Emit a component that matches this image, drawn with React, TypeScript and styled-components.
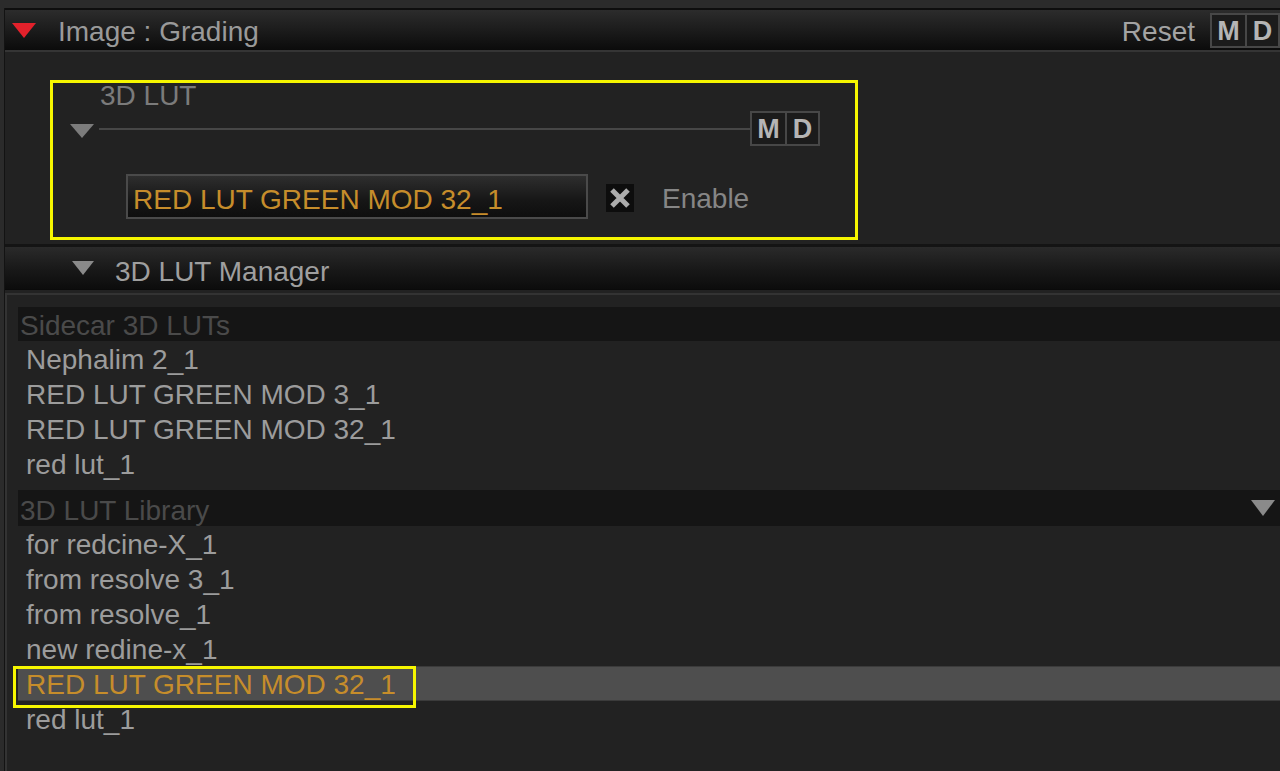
import React from "react";
import styled, { createGlobalStyle } from "styled-components";

const Global = createGlobalStyle`
  html, body { margin: 0; padding: 0; background: #222; }
  body { font-family: "Liberation Sans", Arial, sans-serif; }
  * { box-sizing: border-box; }
`;

const Page = styled.div`
  width: 1280px;
  height: 771px;
  overflow: hidden;
  background: #2b2b2b;
  padding: 8px 0 0 4px;
  display: flex;
  flex-direction: column;
`;

const Group = styled.div`
  flex: 1;
  display: flex;
  flex-direction: column;
  background: #222;
  border-left: 1px solid #131313;
  min-height: 0;
`;

const GroupHeader = styled.div`
  height: 44px;
  border-top: 2px solid #0e0e0e;
  border-bottom: 2px solid #353535;
  background: linear-gradient(#2c2c2c, #1a1a1a 55%, #0b0b0b);
  display: flex;
  align-items: center;
  padding-left: 7px;
  flex-shrink: 0;
`;

const Triangle = styled.div<{ $color: string; $w: number; $h: number }>`
  width: 0;
  height: 0;
  border-left: ${(p) => p.$w / 2}px solid transparent;
  border-right: ${(p) => p.$w / 2}px solid transparent;
  border-top: ${(p) => p.$h}px solid ${(p) => p.$color};
  flex-shrink: 0;
`;

const Title = styled.span<{ $gap: number }>`
  margin-left: ${(p) => p.$gap}px;
  font-size: 28px;
  line-height: 40px;
  padding-top: 4px;
  color: #9a9a9a;
  white-space: nowrap;
`;

const Spacer = styled.div`
  flex: 1;
`;

const ResetLabel = styled.span`
  font-size: 28px;
  line-height: 40px;
  padding-top: 4px;
  color: #a3a3a3;
  margin-right: 15px;
`;

const MDGroup = styled.div`
  display: flex;
  border: 2px solid #474747;
  background: #1b1b1b;
  flex-shrink: 0;
  height: 35px;
`;

const MDCell = styled.div`
  width: 33px;
  height: 31px;
  display: flex;
  align-items: center;
  justify-content: center;
  padding-top: 2px;
  font-size: 27px;
  font-weight: bold;
  color: #b5b5b5;
  & + & {
    border-left: 2px solid #474747;
  }
`;

const GroupBody = styled.div`
  padding: 28px 0 4px 45px;
  flex-shrink: 0;
`;

const Highlight = styled.div`
  width: 808px;
  border: 3px solid #f6f600;
  padding: 1px 35px 18px 17px;
  display: flex;
  flex-direction: column;
`;

const GroupLabel = styled.div`
  margin-left: 30px;
  font-size: 28px;
  line-height: 20px;
  height: 20px;
  padding-top: 2px;
  color: #7b7b7b;
`;

const RuleRow = styled.div`
  margin-top: 7px;
  height: 35px;
  display: flex;
  align-items: center;
`;

const TriWrap = styled.div`
  padding-top: 5px;
  display: flex;
`;

const Rule = styled.div`
  flex: 1;
  height: 2px;
  margin-left: 5px;
  background: #474747;
`;

const ControlRow = styled.div`
  margin-top: 28px;
  margin-left: 56px;
  height: 45px;
  display: flex;
  align-items: center;
`;

const LutInput = styled.div`
  width: 462px;
  height: 45px;
  border: 2px solid #4a4a4a;
  background: linear-gradient(#2e2e2e, #161616 60%, #0e0e0e);
  color: #c68d2b;
  font-size: 28px;
  line-height: 41px;
  padding-left: 5px;
  padding-top: 3px;
  white-space: nowrap;
`;

const CheckBox = styled.div`
  width: 28px;
  height: 28px;
  margin-left: 18px;
  margin-top: 2px;
  background: #0d0d0d;
  display: flex;
  align-items: center;
  justify-content: center;
`;

const EnableLabel = styled.span`
  margin-left: 28px;
  padding-top: 5px;
  font-size: 28px;
  color: #868686;
`;

const SubHeader = styled.div`
  height: 46px;
  border-top: 3px solid #141414;
  border-bottom: 1px solid #0a0a0a;
  background: linear-gradient(#2a2a2a, #181818 55%, #0c0c0c);
  display: flex;
  align-items: center;
  padding-left: 67px;
  flex-shrink: 0;
`;

const SubTitle = styled.span`
  margin-left: 21px;
  font-size: 28px;
  line-height: 42px;
  padding-top: 7px;
  color: #9f9f9f;
`;

const ListPanel = styled.div`
  flex: 1;
  margin-top: 3px;
  border-top: 2px solid #333;
  border-left: 2px solid #333;
  background: #222;
  padding: 12px 0 0 11px;
  display: flex;
  flex-direction: column;
`;

const SectionHeader = styled.div<{ $h: number; $gapTop: number }>`
  height: ${(p) => p.$h}px;
  margin-top: ${(p) => p.$gapTop}px;
  background: #151515;
  color: #4a4a4a;
  font-size: 28px;
  line-height: ${(p) => p.$h}px;
  padding-left: 2px;
  display: flex;
  align-items: center;
  justify-content: space-between;
  padding-right: 5px;
`;

const SectionTitle = styled.span<{ $shift: number }>`
  padding-top: ${(p) => p.$shift}px;
`;

const ListRow = styled.div<{ $selected?: boolean }>`
  position: relative;
  height: 35px;
  line-height: 35px;
  padding-left: 8px;
  padding-top: 1px;
  font-size: 28px;
  white-space: nowrap;
  color: ${(p) => (p.$selected ? "#c68d2b" : "#9c9c9c")};
  background: ${(p) => (p.$selected ? "#4e4e4e" : "transparent")};
  box-shadow: ${(p) =>
    p.$selected ? "inset 0 1px 0 #3b3b3b, inset 0 -1px 0 #3b3b3b" : "none"};
`;

const Annotation = styled.div`
  position: absolute;
  left: -5px;
  top: 0;
  width: 403px;
  height: 42px;
  border: 3px solid #f6f600;
  pointer-events: none;
`;

const sidecar = [
  "Nephalim 2_1",
  "RED LUT GREEN MOD 3_1",
  "RED LUT GREEN MOD 32_1",
  "red lut_1",
];

const library = [
  "for redcine-X_1",
  "from resolve 3_1",
  "from resolve_1",
  "new redine-x_1",
  "RED LUT GREEN MOD 32_1",
  "red lut_1",
];

const SELECTED = 4;

const MD = () => (
  <MDGroup>
    <MDCell>M</MDCell>
    <MDCell>D</MDCell>
  </MDGroup>
);

export default function App() {
  return (
    <>
      <Global />
      <Page>
        <Group>
          <GroupHeader>
            <Triangle $color="#e3212b" $w={24} $h={15} />
            <Title $gap={22}>Image : Grading</Title>
            <Spacer />
            <ResetLabel>Reset</ResetLabel>
            <MD />
          </GroupHeader>
          <GroupBody>
            <Highlight>
              <GroupLabel>3D LUT</GroupLabel>
              <RuleRow>
                <TriWrap>
                  <Triangle $color="#7c7c7c" $w={25} $h={14} />
                </TriWrap>
                <Rule />
                <MD />
              </RuleRow>
              <ControlRow>
                <LutInput>RED LUT GREEN MOD 32_1</LutInput>
                <CheckBox>
                  <svg width="22" height="22" viewBox="0 0 22 22">
                    <path
                      d="M3 3 L19 19 M19 3 L3 19"
                      stroke="#acacac"
                      strokeWidth="5"
                      strokeLinecap="butt"
                    />
                  </svg>
                </CheckBox>
                <EnableLabel>Enable</EnableLabel>
              </ControlRow>
            </Highlight>
          </GroupBody>
          <SubHeader>
            <Triangle $color="#8a8a8a" $w={23} $h={14} />
            <SubTitle>3D LUT Manager</SubTitle>
          </SubHeader>
          <ListPanel>
            <SectionHeader $h={34} $gapTop={0}>
              <SectionTitle $shift={3}>Sidecar 3D LUTs</SectionTitle>
            </SectionHeader>
            {sidecar.map((name) => (
              <ListRow key={"s" + name}>{name}</ListRow>
            ))}
            <SectionHeader $h={36} $gapTop={9}>
              <SectionTitle $shift={5}>3D LUT Library</SectionTitle>
              <Triangle $color="#8a8a8a" $w={25} $h={16} />
            </SectionHeader>
            {library.map((name, i) => (
              <ListRow key={"l" + i} $selected={i === SELECTED}>
                {name}
                {i === SELECTED && <Annotation />}
              </ListRow>
            ))}
          </ListPanel>
        </Group>
      </Page>
    </>
  );
}
